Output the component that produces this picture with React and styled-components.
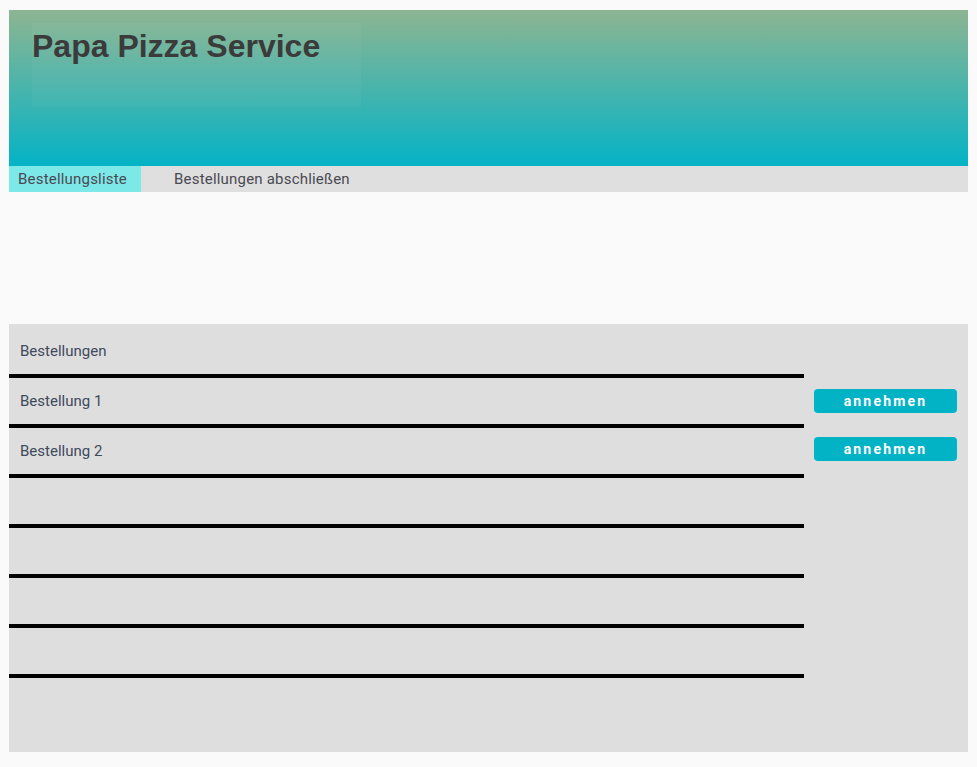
import React from 'react';
import styled, {createGlobalStyle} from 'styled-components';

const GlobalStyle = createGlobalStyle`
  html, body {
    margin: 0;
    background: #fafafa;
  }
  body {
    padding: 10px 9px 15px 9px;
    font-family: Roboto, "Liberation Sans", sans-serif;
  }
`;

const rows = ["Bestellungen", "Bestellung 1", "Bestellung 2", "", "", "", ""];
const pending = ["Bestellung 1", "Bestellung 2"];

export default function App() {
    return <>
        <GlobalStyle/>
        <Header>
            <TitleBox>
                <Title>Papa Pizza Service</Title>
            </TitleBox>
        </Header>
        <Nav>
            <NavItem active>Bestellungsliste</NavItem>
            <NavItem>Bestellungen abschließen</NavItem>
        </Nav>
        <Panel>
            <List>
                {rows.map((name, i) => <Cell key={i}>{name}</Cell>)}
            </List>
            <Actions>
                {pending.map(name => <AcceptButton key={name}>annehmen</AcceptButton>)}
            </Actions>
        </Panel>
    </>;
}

const Header = styled.header`
  height: 156px;
  background: linear-gradient(to bottom, #8db591 0%, #04b3c6 100%);
  padding: 13px 0 0 23px;
  box-sizing: border-box;
`;

const TitleBox = styled.div`
  width: 329px;
  height: 84px;
  background: rgba(255, 255, 255, 0.035);
`;

const Title = styled.h1`
  margin: 0;
  padding-top: 5px;
  font-family: "Liberation Sans", Arial, sans-serif;
  font-weight: bold;
  font-size: 32px;
  line-height: 37px;
  color: #3b3b3b;
`;

const Nav = styled.nav`
  display: flex;
  height: 26px;
  background: #dfdfdf;
  margin-bottom: 132px;
`;

const NavItem = styled.div`
  display: flex;
  align-items: center;
  padding: 0 ${p => p.active ? '23px 0 9px' : '0 0 33px'};
  width: ${p => p.active ? '100px' : 'auto'};
  background: ${p => p.active ? '#7de8e8' : 'transparent'};
  font-size: 15px;
  color: #4a4a52;
  letter-spacing: 0.2px;
`;

const Panel = styled.section`
  display: grid;
  grid-template-columns: 795px 1fr;
  align-items: start;
  background: #dedede;
  height: 428px;
  padding-top: 4px;
  box-sizing: border-box;
`;

const List = styled.div`
  display: flex;
  flex-direction: column;
`;

const Cell = styled.div`
  height: 46px;
  border-bottom: 4px solid #000;
  display: flex;
  align-items: center;
  padding-left: 11px;
  font-size: 15px;
  color: #3f4a5c;
`;

const Actions = styled.div`
  display: flex;
  flex-direction: column;
  gap: 24px;
  padding: 61px 11px 0 10px;
`;

const AcceptButton = styled.button`
  width: 100%;
  height: 24px;
  border: none;
  border-radius: 4px;
  background: #02b3c6;
  color: #fff;
  font-family: Roboto, "Liberation Sans", sans-serif;
  font-weight: bold;
  font-size: 14px;
  letter-spacing: 2.2px;
  padding: 0;
`;
